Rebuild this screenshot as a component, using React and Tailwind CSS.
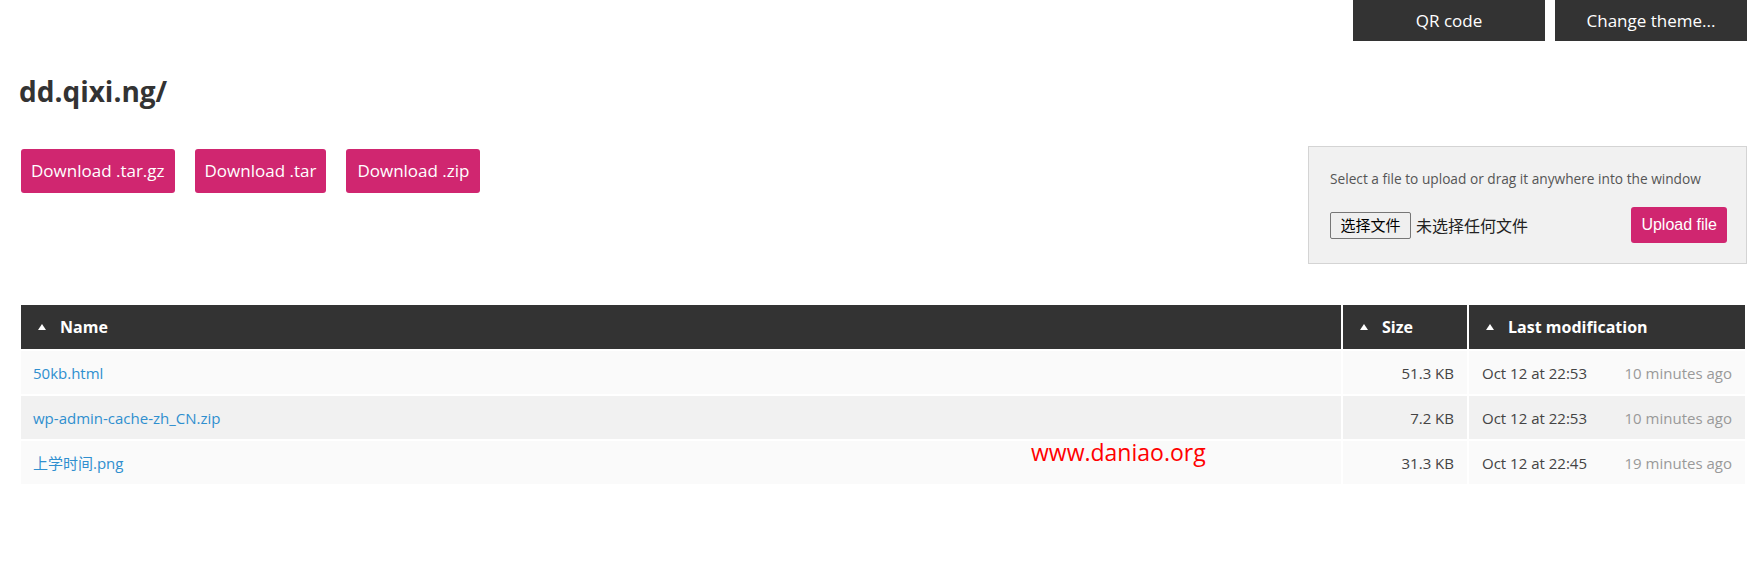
const files = [
  { name: '50kb.html', size: '51.3 KB', date: 'Oct 12 at 22:53', ago: '10 minutes ago' },
  { name: 'wp-admin-cache-zh_CN.zip', size: '7.2 KB', date: 'Oct 12 at 22:53', ago: '10 minutes ago' },
  { name: '上学时间.png', size: '31.3 KB', date: 'Oct 12 at 22:45', ago: '19 minutes ago' },
];

function SortArrow() {
  return (
    <svg width="8" height="6" viewBox="0 0 8 6" className="inline-block">
      <polygon points="4,0 8,6 0,6" fill="#fff" />
    </svg>
  );
}

export default function App() {
  return (
    <div className="min-h-[565px] bg-white pl-[19px] pr-[15px] font-['Open_Sans','Noto_Sans_CJK_SC',sans-serif] text-[#333]">
      {/* top buttons */}
      <div className="flex justify-end gap-[10px]">
        <button className="w-[192px] h-[41px] bg-[#333333] text-white text-[17px]">QR code</button>
        <button className="w-[192px] h-[41px] bg-[#333333] text-white text-[17px]">Change theme...</button>
      </div>

      <h1 className="mt-[33px] text-[28px] leading-[34px] font-bold text-[#333]">dd.qixi.ng/</h1>

      <div className="mt-[38px] flex justify-between items-start">
        <div className="mt-[3px] pl-[2px] flex gap-[20px]">
          <a className="h-[44px] px-[10px] flex items-center rounded-[3px] bg-[#d02670] text-white text-[17px]">Download .tar.gz</a>
          <a className="h-[44px] px-[10px] flex items-center rounded-[3px] bg-[#d02670] text-white text-[17px]">Download .tar</a>
          <a className="h-[44px] px-[11px] flex items-center rounded-[3px] bg-[#d02670] text-white text-[17px]">Download .zip</a>
        </div>

        <div className="w-[439px] h-[118px] border border-[#d4d4d4] bg-[#f1f1f1] pl-[21px] pr-[19px] pt-[22px]">
          <p className="text-[13.7px] leading-[20px] text-[#555]">Select a file to upload or drag it anywhere into the window</p>
          <div className="mt-[18px] flex items-center justify-between">
            <div className="flex items-center gap-[5px]">
              <span className="h-[27px] w-[81px] flex items-center justify-center border border-[#767676] rounded-[2px] bg-[#efefef] text-[15px] text-black font-['Noto_Sans_CJK_SC',sans-serif]">选择文件</span>
              <span className="text-[16px] text-[#222] font-['Noto_Sans_CJK_SC',sans-serif]">未选择任何文件</span>
            </div>
            <button className="h-[36px] px-[10px] rounded-[3px] bg-[#d02670] text-white text-[16px] font-['Liberation_Sans',Arial,sans-serif]">Upload file</button>
          </div>
        </div>
      </div>

      <div className="relative mt-[39px]">
        <table className="w-full border-separate border-spacing-[2px] text-[15px]">
          <thead>
            <tr className="h-[44px] bg-[#333333] text-white text-[16px] font-bold text-left">
              <th className="pl-[17px]">
                <span className="flex items-center gap-[14px]"><SortArrow />Name</span>
              </th>
              <th className="w-[124px] pl-[17px]">
                <span className="flex items-center gap-[14px]"><SortArrow />Size</span>
              </th>
              <th className="w-[276px] pl-[17px]">
                <span className="flex items-center gap-[14px]"><SortArrow />Last modification</span>
              </th>
            </tr>
          </thead>
          <tbody>
            {files.map((f, i) => (
              <tr key={f.name} className={i % 2 === 1 ? 'h-[43px] bg-[#f1f1f1]' : 'h-[43px] bg-[#fafafa]'}>
                <td className="pl-[12px] leading-[20px] text-[#2f8fcf]">{f.name}</td>
                <td className="pr-[13px] leading-[20px] text-right text-[#444]">{f.size}</td>
                <td className="px-[13px] leading-[20px]">
                  <div className="flex justify-between">
                    <span className="text-[#444]">{f.date}</span>
                    <span className="text-[#999]">{f.ago}</span>
                  </div>
                </td>
              </tr>
            ))}
          </tbody>
        </table>
        <span className="absolute left-[1012px] top-[138px] text-[23px] leading-[23px] text-[#ff0000]">www.daniao.org</span>
      </div>
    </div>
  );
}
